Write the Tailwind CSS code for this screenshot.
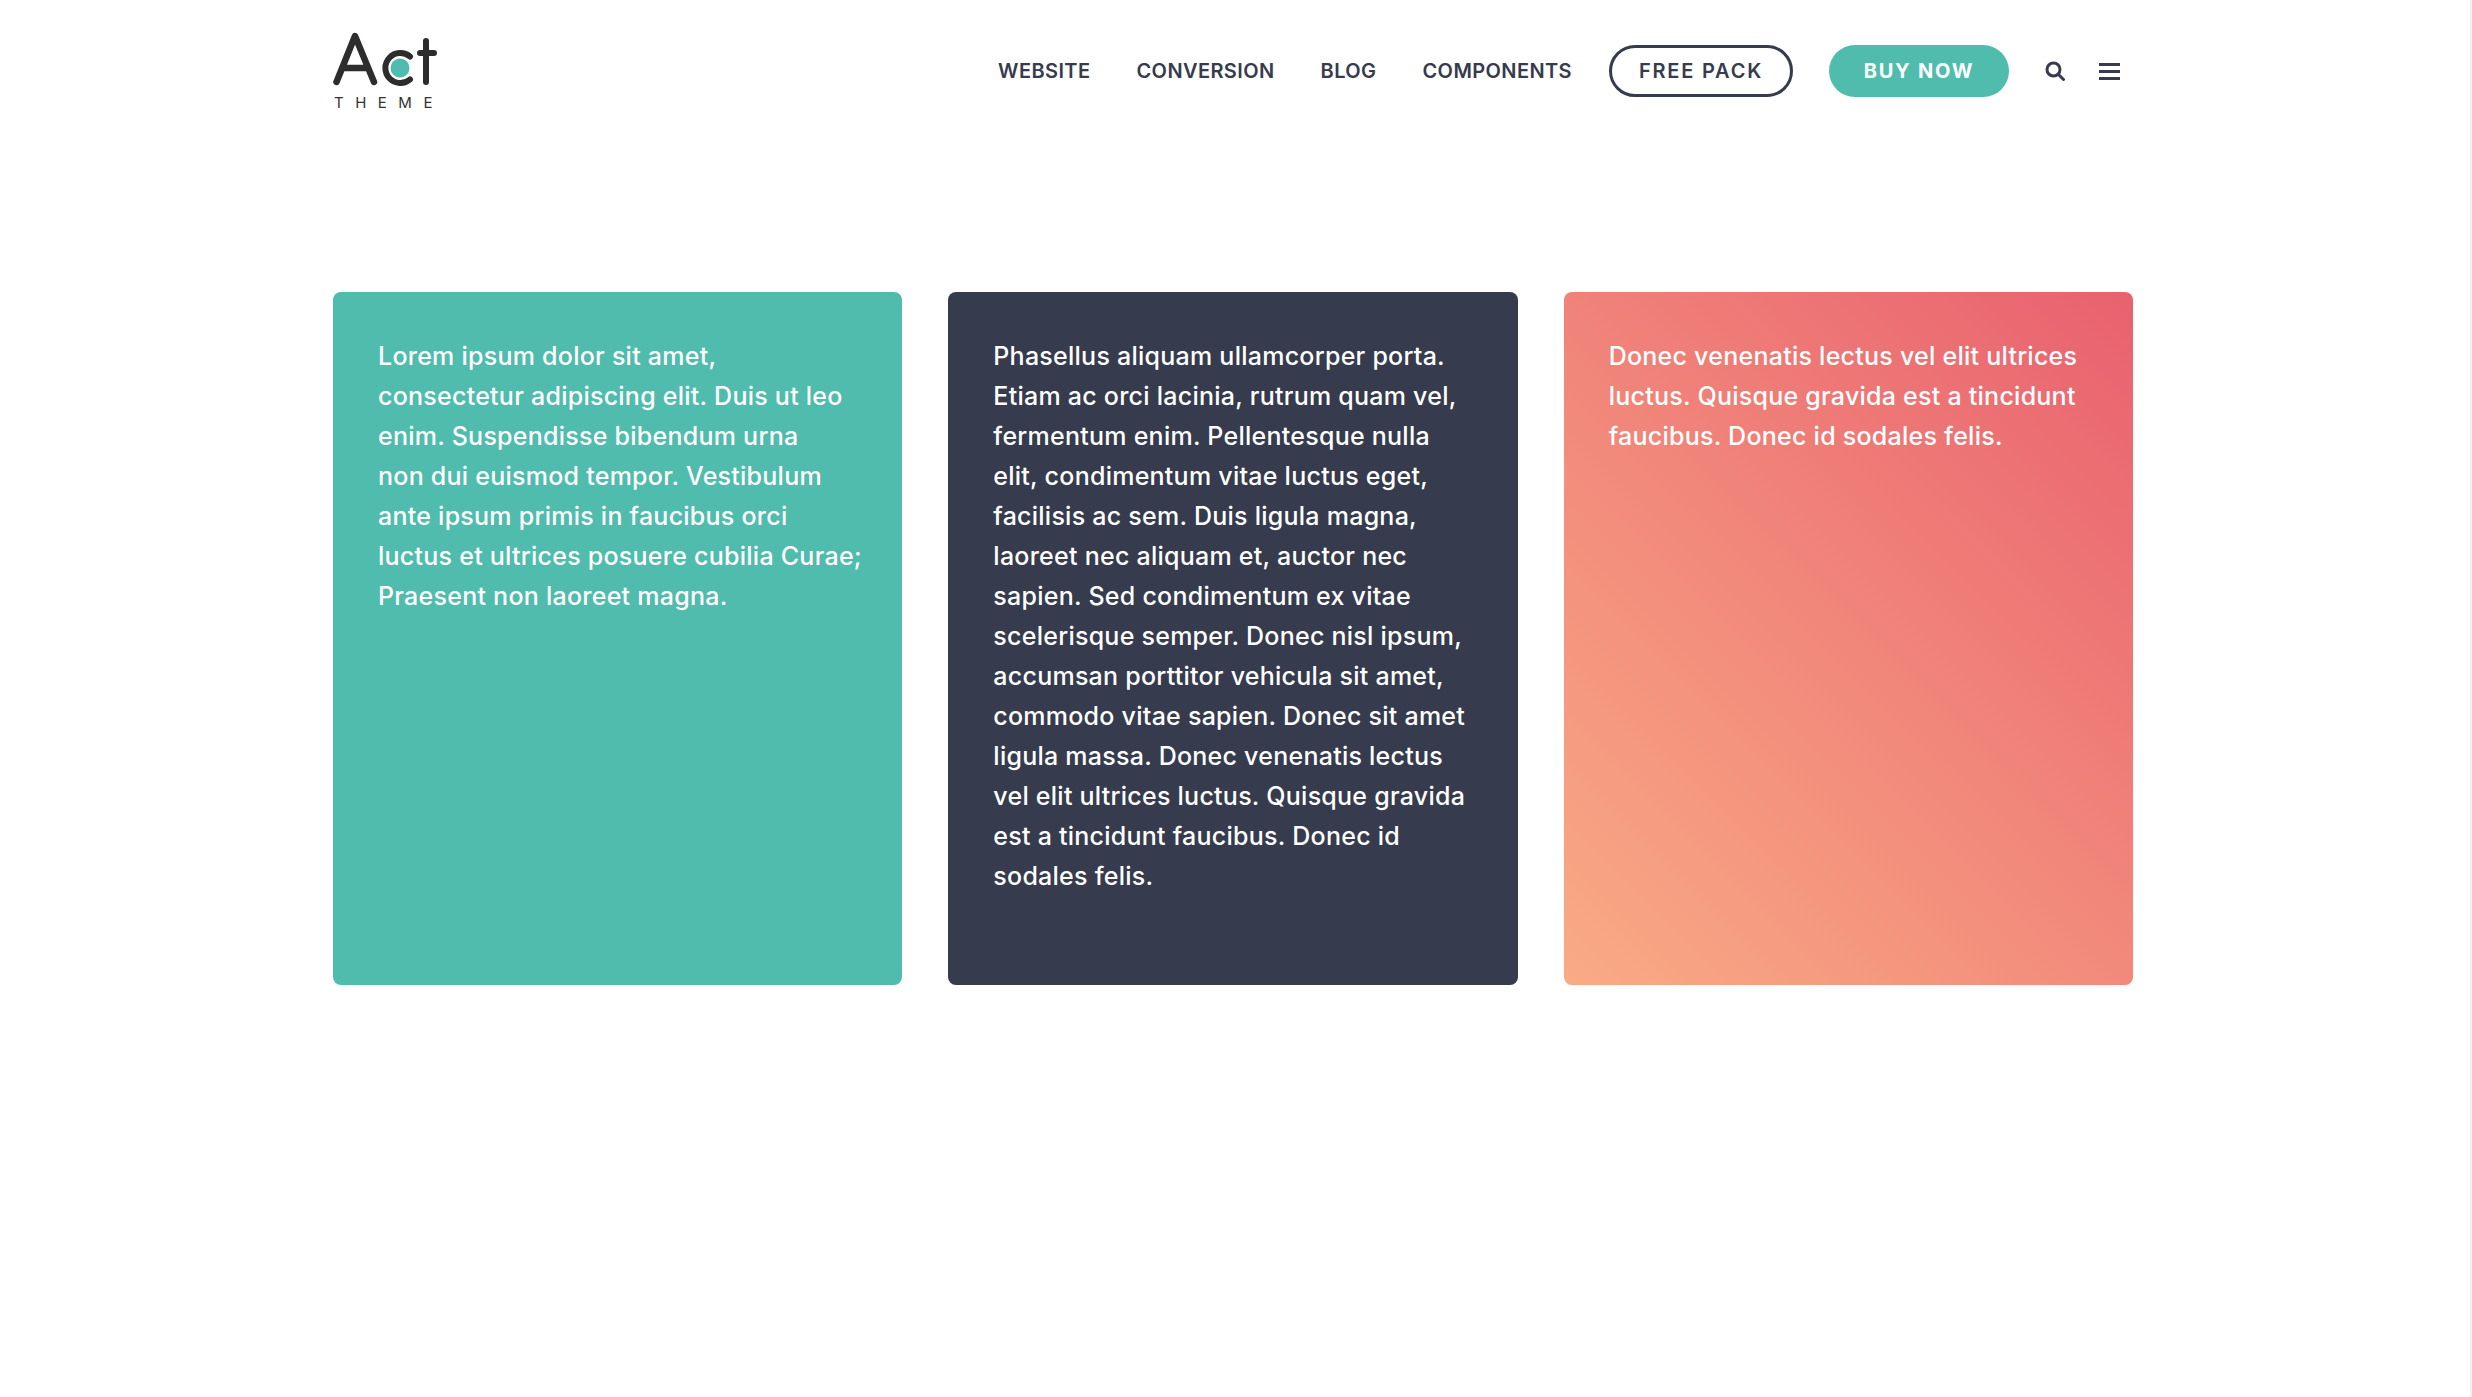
<!DOCTYPE html>
<html lang="en">
<head>
  <meta charset="UTF-8" />
  <title>Act Theme</title>
  <script src="https://cdn.jsdelivr.net/npm/@tailwindcss/browser@4"></script>
</head>
<body class="bg-white font-['Inter',sans-serif] text-[#363b4e] overflow-hidden">
  <div class="h-[1397px] border-r-2 border-[#f1f1f1]">
    <!-- Header -->
    <header class="w-[1800px] ml-[333px] h-[292px] flex items-start justify-between">
      <div class="mt-[28px] w-[124px]">
        <svg width="124" height="84" viewBox="0 0 124 84" fill="none">
          <path d="M3.5 54 L22 8 L41 54 M10 40 H34" stroke="#2d2d2d" stroke-width="6.5" stroke-linecap="round" stroke-linejoin="round"/>
          <path d="M77 28.5 A15 15 0 1 0 77 51.5" stroke="#2d2d2d" stroke-width="6" stroke-linecap="round"/>
          <circle cx="67" cy="40" r="9.5" fill="#4fbcad"/>
          <path d="M93 13 V54 M87 25 H101" stroke="#2d2d2d" stroke-width="6" stroke-linecap="round"/>
          <text x="1" y="80" font-family="Inter, sans-serif" font-size="15" letter-spacing="11.5" fill="#333">THEME</text>
        </svg>
      </div>
      <nav class="flex items-center h-[52px] mt-[45px] mr-[13px] text-[20px] font-semibold tracking-[0.4px]">
        <a class="mr-[46px]">WEBSITE</a>
        <a class="mr-[46px]">CONVERSION</a>
        <a class="mr-[46px]">BLOG</a>
        <a class="mr-[37px]">COMPONENTS</a>
        <a class="mr-[36px] w-[184px] h-[52px] flex items-center justify-center rounded-full border-[3px] border-[#363b4e] tracking-[1.8px]">FREE PACK</a>
        <a class="mr-[36px] w-[180px] h-[52px] flex items-center justify-center rounded-full bg-[#4fbcad] text-white font-bold tracking-[1.8px]">BUY NOW</a>
        <svg class="mr-[34px]" width="20" height="20" viewBox="0 0 20 20" fill="none" stroke="#363b4e" stroke-width="3"><circle cx="8.5" cy="8.5" r="6.5"/><path d="M13.5 13.5 L18.5 18.5" stroke-linecap="round"/></svg>
        <div class="w-[21px] flex flex-col gap-[4px]">
          <span class="h-[3px] bg-[#363b4e]"></span>
          <span class="h-[3px] bg-[#363b4e]"></span>
          <span class="h-[3px] bg-[#363b4e]"></span>
        </div>
      </nav>
    </header>
    <!-- Cards -->
    <section class="w-[1800px] ml-[333px] grid grid-cols-3 gap-[46px] text-white text-[25px] leading-[40px] font-medium tracking-[0.25px]">
      <div class="h-[693px] rounded-[8px] bg-[#4fbcad] px-[45px] pt-[44px] whitespace-nowrap">
        Lorem ipsum dolor sit amet,<br>consectetur adipiscing elit. Duis ut leo<br>enim. Suspendisse bibendum urna<br>non dui euismod tempor. Vestibulum<br>ante ipsum primis in faucibus orci<br>luctus et ultrices posuere cubilia Curae;<br>Praesent non laoreet magna.
      </div>
      <div class="h-[693px] rounded-[8px] bg-[#363b4e] px-[45px] pt-[44px] whitespace-nowrap">
        Phasellus aliquam ullamcorper porta.<br>Etiam ac orci lacinia, rutrum quam vel,<br>fermentum enim. Pellentesque nulla<br>elit, condimentum vitae luctus eget,<br>facilisis ac sem. Duis ligula magna,<br>laoreet nec aliquam et, auctor nec<br>sapien. Sed condimentum ex vitae<br>scelerisque semper. Donec nisl ipsum,<br>accumsan porttitor vehicula sit amet,<br>commodo vitae sapien. Donec sit amet<br>ligula massa. Donec venenatis lectus<br>vel elit ultrices luctus. Quisque gravida<br>est a tincidunt faucibus. Donec id<br>sodales felis.
      </div>
      <div class="h-[693px] rounded-[8px] bg-[linear-gradient(45deg,#f9ab85,#e9616f)] px-[45px] pt-[44px] whitespace-nowrap">
        Donec venenatis lectus vel elit ultrices<br>luctus. Quisque gravida est a tincidunt<br>faucibus. Donec id sodales felis.
      </div>
    </section>
  </div>
</body>
</html>
